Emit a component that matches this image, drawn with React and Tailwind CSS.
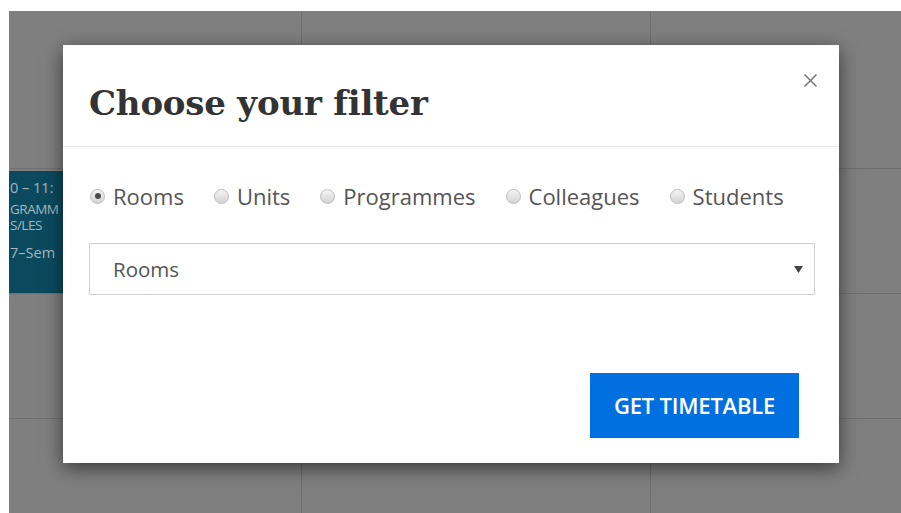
import React from "react";

const filters = [
  { label: "Rooms", checked: true },
  { label: "Units" },
  { label: "Programmes" },
  { label: "Colleagues" },
  { label: "Students" },
];

function Radio({ label, checked }) {
  return (
    <label className="flex items-center gap-[8px] cursor-pointer">
      <span className="w-[15px] h-[15px] rounded-full border border-[#bdbdbd] bg-gradient-to-b from-[#f4f4f4] to-[#d3d3d3] flex items-center justify-center shrink-0">
        {checked && <span className="w-[6px] h-[6px] rounded-full bg-[#4a4a4a]" />}
      </span>
      <span className="text-[22px] leading-[30px] text-[#555]">{label}</span>
    </label>
  );
}

function Cell({ children, className = "" }) {
  return <div className={`border-r border-b border-[#6e6e6e] ${className}`}>{children}</div>;
}

export default function App() {
  return (
    <div
      className="w-[901px] h-[513px] bg-white pt-[11px] pl-[9px] overflow-hidden"
      style={{ fontFamily: '"Open Sans", sans-serif' }}
    >
      <div className="relative w-[892px] h-[502px] bg-[#7f7f7f] overflow-hidden">
        {/* timetable behind the overlay */}
        <div className="grid grid-cols-[293px_349px_1fr] grid-rows-[158px_125px_125px_1fr] h-full">
          <Cell />
          <Cell />
          <Cell className="border-r-0" />
          <Cell className="pt-[2px]">
            <div className="w-[60px] h-[122px] bg-[#0b4a5e] text-[#a3b8bf] text-[14.5px] pl-[1px] pt-[8px] overflow-hidden whitespace-nowrap">
              <div className="leading-[18px]">0 – 11:</div>
              <div className="mt-[4px] text-[13.5px] leading-[16px] tracking-[-0.5px]">GRAMM</div>
              <div className="text-[13.5px] leading-[16px] tracking-[-0.5px]">S/LES</div>
              <div className="mt-[11px] leading-[18px]">7–Sem</div>
            </div>
          </Cell>
          <Cell />
          <Cell className="border-r-0" />
          <Cell />
          <Cell />
          <Cell className="border-r-0" />
          <Cell className="border-b-0" />
          <Cell className="border-b-0" />
          <Cell className="border-b-0 border-r-0" />
        </div>

        {/* filter dialog */}
        <div className="absolute left-[54px] top-[34px] w-[776px] h-[418px] bg-white shadow-[0_5px_18px_rgba(0,0,0,0.55)] flex flex-col">
          <div className="relative h-[102px] border-b border-[#e8e8e8] px-[26px] pt-[38px] shrink-0">
            <h2
              className="text-[34px] leading-[40px] font-bold text-[#333] tracking-[-0.2px]"
              style={{ fontFamily: '"DejaVu Serif", serif' }}
            >
              Choose your filter
            </h2>
            <button className="absolute right-[21px] top-[28px] w-[15px] h-[15px] text-[#7a7a7a]">
              <svg viewBox="0 0 15 15" width="15" height="15" fill="none" stroke="currentColor" strokeWidth="1.6">
                <path d="M1.5 1.5 L13.5 13.5 M13.5 1.5 L1.5 13.5" />
              </svg>
            </button>
          </div>

          <div className="flex flex-col pl-[26px] pr-[24px] pt-[34px]">
            <div className="flex items-center gap-[30px] pl-[1px]">
              {filters.map((f) => (
                <Radio key={f.label} label={f.label} checked={f.checked} />
              ))}
            </div>

            <div className="mt-[32px] w-[726px] h-[52px] border border-[#cfcfcf] flex items-center justify-between pl-[23px] pr-[11px]">
              <span className="text-[20.5px] text-[#555]">Rooms</span>
              <svg width="9" height="7" viewBox="0 0 9 7">
                <path d="M0 0 H9 L4.5 7 Z" fill="#444" />
              </svg>
            </div>

            <button className="self-end mt-[78px] mr-[16px] w-[209px] h-[65px] bg-[#0070e0] text-white text-[22px] font-semibold tracking-[-0.2px]">
              GET TIMETABLE
            </button>
          </div>
        </div>
      </div>
    </div>
  );
}
